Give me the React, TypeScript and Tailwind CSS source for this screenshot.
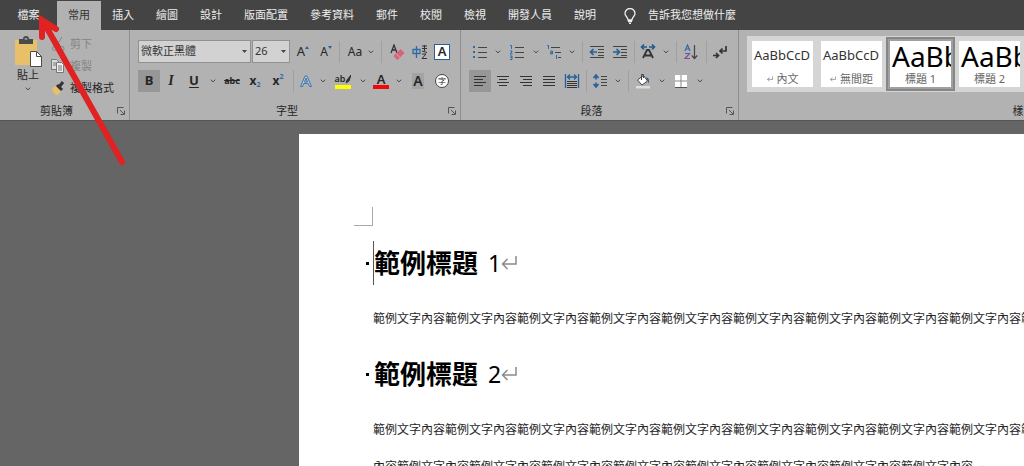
import type { ReactNode } from "react";

const SAMPLE = "範例文字內容";

const tabs = ["常用", "插入", "繪圖", "設計", "版面配置", "參考資料", "郵件", "校閱", "檢視", "開發人員", "說明"];

const styles = [
  { name: "內文", mark: true, big: false },
  { name: "無間距", mark: true, big: false },
  { name: "標題 1", mark: false, big: true },
  { name: "標題 2", mark: false, big: true },
];

interface ToolProps {
  label: string;
  className?: string;
  active?: boolean;
  children: ReactNode;
}

function Tool({ label, className = "w-[22px]", active, children }: ToolProps) {
  return (
    <button
      type="button"
      aria-label={label}
      aria-pressed={active}
      className={`flex h-[22px] shrink-0 items-center justify-center ${active ? "bg-[#979797]" : ""} ${className}`}
    >
      {children}
    </button>
  );
}

function Chevron() {
  return (
    <svg width="6" height="4" viewBox="0 0 6 4" fill="none" stroke="#444" aria-hidden="true">
      <path d="M.8.7 3 2.9 5.2.7" />
    </svg>
  );
}

function More({ label }: { label: string }) {
  return (
    <Tool label={label} className="w-3.5">
      <Chevron />
    </Tool>
  );
}

function Divider() {
  return (
    <div className="flex w-1.5 shrink-0 justify-center">
      <div className="h-[22px] w-px bg-[#a0a0a0]" />
    </div>
  );
}

// width/height 16 box shared by most ribbon icons
function Icon({ children }: { children: ReactNode }) {
  return (
    <svg width="16" height="16" viewBox="0 0 16 16" fill="none" aria-hidden="true">
      {children}
    </svg>
  );
}

function Group({ title, className, children }: { title: string; className: string; children: ReactNode }) {
  return (
    <section
      aria-label={title}
      className={`flex shrink-0 flex-col justify-between border-r border-[#8e8e8e] ${className}`}
    >
      {children}
      <div className="flex h-[18px] items-center pr-1">
        <span className="flex-1 pr-1 text-center text-[11px] leading-4">{title}</span>
        <button type="button" aria-label={`${title}設定`}>
          <svg width="8" height="8" viewBox="0 0 8 8" fill="none" stroke="#555">
            <path d="M.5 6.500v-6h6M3 3l4 4M7.500 3.500v4h-4" />
          </svg>
        </button>
      </div>
    </section>
  );
}

function Combo({ label, value, className }: { label: string; value: string; className: string }) {
  return (
    <div className={`relative h-[23px] shrink-0 ${className}`}>
      <select
        aria-label={label}
        defaultValue={value}
        className="block h-full w-full appearance-none border border-[#919191] bg-[#d2d2d2] pl-0.5 text-[11px] text-[#333]"
      >
        <option>{value}</option>
      </select>
      <svg width="5" height="3" viewBox="0 0 5 3" className="pointer-events-none absolute top-2.5 right-1" aria-hidden="true">
        <path d="M0 0h5L2.500 3z" fill="#444" />
      </svg>
    </div>
  );
}

function ClipboardGroup() {
  return (
    <Group title="剪貼簿" className="w-[130px]">
      <div className="flex pt-[3px] pl-3">
        <button type="button" className="flex w-8 flex-col items-center pt-[3px] text-[11px] leading-4">
          <svg width="28" height="31" viewBox="0 0 28 31" aria-hidden="true">
            <path d="M1 4h22v25H1z" fill="#e8c069" />
            <path d="M5 3h4a3 3 0 0 1 6 0h4v5H5z" fill="#4a4a4a" />
            <path d="M10.500 3.500a1.500 1.500 0 0 1 3 0z" fill="#bbb" />
            <path d="M16.500 15.500h6l5 5v10h-11z" fill="#fff" stroke="#4a4a4a" />
            <path d="M22.500 15.500v5h5" fill="none" stroke="#4a4a4a" />
          </svg>
          <span>貼上</span>
          <span className="flex h-3 items-center">
            <Chevron />
          </span>
        </button>
        <div className="flex flex-col pl-1.5 text-[11px] leading-4 whitespace-nowrap">
          <button type="button" disabled className="flex h-[22px] items-center gap-1 text-[#858585]">
            <Icon>
              <path d="m5 1 6 10M12 1 6 11" stroke="#858585" />
              <circle cx="4.500" cy="12.500" r="2" stroke="#858585" />
              <circle cx="12" cy="12.500" r="2" stroke="#858585" />
            </Icon>
            剪下
          </button>
          <button type="button" disabled className="flex h-[22px] items-center gap-1 text-[#858585]">
            <Icon>
              <path d="M1.500 1.500h5l2 2v8h-7z" fill="#ddd" stroke="#777" />
              <path d="M6.500 4.500h5l2 2v8h-7z" fill="#eee" stroke="#777" />
              <path d="M3 5h3M3 7h3M8 8h4M8 10h4M8 12h4" stroke="#777" />
            </Icon>
            複製
          </button>
          <button type="button" className="flex h-[22px] items-center gap-1">
            <Icon>
              <path d="m2 8 4-2 5 5-3 4c-3 0-5-2-6-7z" fill="#e8c069" />
              <path d="m7 5 5 5M9 7l4-5" stroke="#333" strokeWidth="3" />
            </Icon>
            複製格式
          </button>
        </div>
      </div>
    </Group>
  );
}

function FontGroup() {
  return (
    <Group title="字型" className="w-[331px]">
      <div className="flex flex-col gap-[7px] pt-2.5 pl-2">
        <div className="flex h-[23px] items-center">
          <Combo label="字型名稱" value="微軟正黑體" className="mr-px w-[113px]" />
          <Combo label="字型大小" value="26" className="w-[38px]" />
          <Tool label="放大字型" className="w-[26px]">
            <span className="text-[13px]">A</span>
            <svg width="4" height="12" viewBox="0 0 4 12"><path d="M0 3h4L2 0z" fill="#2b6398" /></svg>
          </Tool>
          <Tool label="縮小字型" className="w-5">
            <span className="text-xs">A</span>
            <svg width="4" height="12" viewBox="0 0 4 12"><path d="M0 0h4L2 3z" fill="#2b6398" /></svg>
          </Tool>
          <Divider />
          <Tool label="大小寫轉換" className="w-[22px] pl-1"><span className="text-xs">Aa</span></Tool>
          <More label="大小寫選項" />
          <Divider />
          <Tool label="清除格式" className="w-[26px]">
            <Icon>
              <path d="m2 9 3-8 3 8M3 6h4" stroke="#333" strokeWidth="1.300" />
              <path d="m4.500 12 7-7 4 4-7 7z" fill="#d9627a" />
              <path d="m7 9.500 4 4" stroke="#e9a3b1" />
            </Icon>
          </Tool>
          <Tool label="注音標示" className="w-5">
            <Icon>
              <path d="M1 5.500h7v4H1zM4.500 2v12" stroke="#2f6ba6" strokeWidth="1.300" />
              <path d="M10 2h5M10 4.500h5M12.500 1v6M10 7l5 1.500M10 10h4l-4 4.500h5" stroke="#333" />
            </Icon>
          </Tool>
          <Tool label="字元框線" className="w-6">
            <span className="flex size-4 items-center justify-center border border-[#2f5d8d] bg-white text-[13px] leading-none font-semibold">A</span>
          </Tool>
        </div>
        <div className="flex items-center">
          <Tool label="粗體" active><b className="text-[13px]">B</b></Tool>
          <Tool label="斜體"><i className="font-['Liberation_Serif',serif] text-sm font-bold">I</i></Tool>
          <Tool label="底線" className="w-6"><b className="text-[13px] underline underline-offset-2">U</b></Tool>
          <More label="底線選項" />
          <Tool label="刪除線" className="w-6"><b className="text-[9px] line-through">abc</b></Tool>
          <Tool label="下標">
            <b className="text-xs">x</b>
            <b className="pt-2 text-[7px] text-[#2f6ba6]">2</b>
          </Tool>
          <Tool label="上標" className="w-6">
            <b className="text-xs">x</b>
            <b className="pb-2 text-[7px] text-[#2f6ba6]">2</b>
          </Tool>
          <Divider />
          <Tool label="文字效果" className="w-5">
            <Icon>
              <path d="M2.500 13.500 7 3h2l4.500 10.500h-2l-1.200-3H5.700l-1.200 3zM6.400 9h3.200L8 5z" fill="#b9cde0" stroke="#3d76ad" />
            </Icon>
          </Tool>
          <More label="文字效果選項" />
          <Tool label="醒目提示" className="w-[26px]">
            <span className="flex w-4 flex-col items-center">
              <span className="flex h-3 items-center text-[9px] font-semibold">
                ab
                <svg width="6" height="10" viewBox="0 0 6 10"><path d="M6 1 2 6 1 9l3-2z" fill="#333" stroke="#333" /></svg>
              </span>
              <span className="h-1 w-4 bg-[#ffff00]" />
            </span>
          </Tool>
          <More label="醒目提示色彩" />
          <Tool label="字型色彩">
            <span className="flex w-4 flex-col items-center">
              <span className="h-3 text-[13px] leading-3 font-semibold">A</span>
              <span className="h-1 w-4 bg-[#ee0808]" />
            </span>
          </Tool>
          <More label="字型色彩選項" />
          <Tool label="字元網底" className="w-6">
            <span className="flex h-4 w-3 items-center justify-center bg-[#a3a3a3] text-sm leading-none font-semibold">A</span>
          </Tool>
          <Tool label="圍繞字元" className="w-6">
            <span className="flex size-3.5 items-center justify-center rounded-full border border-[#444] bg-white text-[8px] leading-none">字</span>
          </Tool>
        </div>
      </div>
    </Group>
  );
}

function ParagraphGroup() {
  return (
    <Group title="段落" className="w-[278px]">
      <div className="flex flex-col gap-[7px] pt-2.5 pl-2">
        <div className="flex h-[23px] items-center">
          <Tool label="項目符號">
            <Icon>
              <path d="M1 3h2M1 8h2M1 13h2" stroke="#2f6ba6" strokeWidth="2" />
              <path d="M6 3.500h9M6 8.500h9M6 13.500h9" stroke="#444" />
            </Icon>
          </Tool>
          <More label="項目符號庫" />
          <Tool label="編號" className="w-6">
            <Icon>
              <path d="M1 1.500h1.500V5M1 7h2v1L1 10h2.500M1 12h2v3.500H1M1.500 13.500H3" stroke="#2f6ba6" />
              <path d="M6 3.500h9M6 8.500h9M6 13.500h9" stroke="#444" />
            </Icon>
          </Tool>
          <More label="編號庫" />
          <Tool label="多層次清單">
            <Icon>
              <path d="M1 1.500h1.500V5M4 7h2.500v3H4.500V8.500h2M10.500 11v4" stroke="#2f6ba6" />
              <path d="M5 3.500h9M9 8.500h6M12 13.500h3" stroke="#444" />
            </Icon>
          </Tool>
          <More label="清單庫" />
          <Divider />
          <Tool label="減少縮排" className="w-6">
            <Icon>
              <path d="M1 2.500h14M9 5.500h6M9 8.500h6M9 11.500h6M1 13.500h14" stroke="#444" />
              <path d="M8 8H2M4.500 5 1.500 8l3 3" stroke="#24609c" strokeWidth="1.700" />
            </Icon>
          </Tool>
          <Tool label="增加縮排">
            <Icon>
              <path d="M1 2.500h14M9 5.500h6M9 8.500h6M9 11.500h6M1 13.500h14" stroke="#444" />
              <path d="M1 8h6M4.500 5l3 3-3 3" stroke="#24609c" strokeWidth="1.700" />
            </Icon>
          </Tool>
          <Divider />
          <Tool label="亞洲方式配置">
            <Icon>
              <path d="M7 3H2M4 .5 1.500 3 4 5.500M9 3h5M12 .5 14.500 3 12 5.500" stroke="#245a90" strokeWidth="1.600" />
              <path d="m3 14 4-8h2l4 8M5 11.500h6" stroke="#333" strokeWidth="1.800" />
            </Icon>
          </Tool>
          <More label="亞洲方式選項" />
          <Divider />
          <Tool label="排序" className="w-6">
            <Icon>
              <path d="m2 7 2.500-6L7 7M3 5h3" stroke="#2f6ba6" strokeWidth="1.200" />
              <path d="M2 9.500h4.500L2 14.500h5" stroke="#7b4fa0" strokeWidth="1.200" />
              <path d="M11.500 1v13M8.800 11.500l2.700 3 2.700-3" stroke="#444" strokeWidth="1.200" />
            </Icon>
          </Tool>
          <Divider />
          <Tool label="顯示編輯標記">
            <Icon>
              <path d="M14 2v5H8M10.500 4.500 8 7l2.500 2.500M1 11.500h5M4 9l2.500 2.500L4 14" stroke="#333" strokeWidth="1.700" />
            </Icon>
          </Tool>
        </div>
        <div className="flex items-center">
          <Tool label="靠左對齊" active>
            <Icon><path d="M2 3.500h12M2 6.500h9M2 9.500h12M2 12.500h9" stroke="#333" /></Icon>
          </Tool>
          <Tool label="置中" className="w-6">
            <Icon><path d="M2 3.500h12M4 6.500h8M2 9.500h12M4 12.500h8" stroke="#333" /></Icon>
          </Tool>
          <Tool label="靠右對齊">
            <Icon><path d="M2 3.500h12M5 6.500h9M2 9.500h12M5 12.500h9" stroke="#333" /></Icon>
          </Tool>
          <Tool label="左右對齊" className="w-6">
            <Icon><path d="M2 3.500h12M2 6.500h12M2 9.500h12M2 12.500h12" stroke="#333" /></Icon>
          </Tool>
          <Tool label="分散對齊">
            <Icon>
              <path d="M1.500 1v14M14.500 1v14M3 4h10M6 1.500 3.500 4 6 6.500M10 1.500 12.500 4 10 6.500" stroke="#24609c" strokeWidth="1.300" />
              <path d="M3 8.500h10M3 10.500h10M3 12.500h10M3 14.500h10" stroke="#333" />
            </Icon>
          </Tool>
          <Divider />
          <Tool label="行距">
            <Icon>
              <path d="M4 2v4.500M4 9.500V14M1.500 5 4 2l2.500 3M1.500 11 4 14l2.500-3" stroke="#24609c" strokeWidth="1.600" />
              <path d="M9 3.500h6M9 6.500h6M9 9.500h6M9 12.500h6" stroke="#444" />
            </Icon>
          </Tool>
          <More label="行距選項" />
          <Divider />
          <Tool label="網底" className="w-6">
            <Icon>
              <path d="m2.500 7 6-4.500 4 5.500L7 12z" fill="#fff" stroke="#444" />
              <path d="M6.500 7V1.500h2V5" stroke="#444" />
              <path d="M11 4.500c3 0 3 2 3 6-1-1-1-2-1.500-3z" fill="#2f5d8d" />
              <path d="M1 13h14v2.500H1z" fill="#ddd" />
            </Icon>
          </Tool>
          <More label="網底色彩" />
          <Tool label="框線" className="w-6">
            <Icon>
              <path d="M2 2h12v12H2z" fill="#fff" />
              <path d="M8 2v12M2 8h12" stroke="#888" />
              <path d="M2 14.500h12" stroke="#555" />
            </Icon>
          </Tool>
          <More label="框線選項" />
        </div>
      </div>
    </Group>
  );
}

function StylesGroup() {
  return (
    <Group title="樣式" className="w-[586px]">
      <div className="mt-1.5 ml-2 flex h-14 items-center bg-[#d5d5d5] pl-px">
        {styles.map((s, i) => (
          <button
            type="button"
            key={s.name}
            className={`flex h-[54px] w-[69px] shrink-0 border-2 p-0.5 ${i === 2 ? "border-[#868686] bg-[#a0a0a0]" : "border-transparent"}`}
          >
            <span className="flex h-full w-full flex-col items-center justify-between overflow-hidden bg-white">
              <span
                className={`flex h-[30px] w-full items-center overflow-hidden pl-0.5 font-['Noto_Sans',sans-serif] whitespace-nowrap ${s.big ? "text-[28px] leading-6 text-black" : "text-[13px] text-[#333]"}`}
              >
                {s.big ? "AaBb" : "AaBbCcD"}
              </span>
              <span className="flex items-center gap-1 text-[11px] leading-4 text-[#666]">
                {s.mark && <ReturnMark className="size-1.5 stroke-[#555]" />}
                {s.name}
              </span>
            </span>
          </button>
        ))}
      </div>
    </Group>
  );
}

function ReturnMark({ className }: { className: string }) {
  return (
    <svg viewBox="0 0 16 16" fill="none" strokeWidth="1.500" className={className} aria-hidden="true">
      <path d="M15 1v8H1.500M6.500 4l-5 5 5 5" />
    </svg>
  );
}

function Heading({ no, caret }: { no: number; caret?: boolean }) {
  return (
    <h1 className="flex h-[74px] items-center pl-[67px] text-black">
      <span className="mr-1 size-[3px] bg-black" />
      <span className={`h-11 w-px ${caret ? "bg-[#555]" : ""}`} />
      <span className="text-[26px] leading-10 font-bold">範例標題</span>
      <span className="pl-2.5 font-['Noto_Sans',sans-serif] text-[23px]">{no}</span>
      <ReturnMark className="size-4 stroke-[#8a8a8a]" />
    </h1>
  );
}

export default function App() {
  return (
    <div className="relative flex h-screen flex-col overflow-hidden bg-[#656565] font-['Noto_Sans','Noto_Sans_CJK_TC',sans-serif] text-[#262626]">
      <nav className="flex h-[30px] shrink-0 items-stretch bg-[#444] pt-px text-[11px] whitespace-nowrap text-[#eee]">
        <button type="button" className="w-[57px]">檔案</button>
        {tabs.map((tab, i) => (
          <button
            type="button"
            key={tab}
            className={`px-[11px] ${i === 0 ? "bg-[#b2b2b2] text-[#333]" : ""}`}
          >
            {tab}
          </button>
        ))}
        <button type="button" className="flex items-center gap-3 pl-[17px]">
          <svg width="12" height="16" viewBox="0 0 12 16" fill="none" stroke="#eee" strokeWidth="1.300" aria-hidden="true">
            <path d="M4 12c0-3-3-3.500-3-6.500a5 5 0 0 1 10 0C11 8.500 8 9 8 12zM4 13.500h4M5 15.300h2" />
          </svg>
          告訴我您想做什麼
        </button>
      </nav>

      <div className="flex h-[91px] shrink-0 border-b border-[#555] bg-[#b2b2b2]">
        <ClipboardGroup />
        <FontGroup />
        <ParagraphGroup />
        <StylesGroup />
      </div>

      <main className="flex min-h-0 flex-1 pt-[13px] pl-[299px]">
        <article className="min-w-[860px] flex-1 bg-white pt-[73px]">
          <div className="ml-[55px] h-[19px] w-[19px] border-r border-b border-[#aaa]" />
          <Heading no={1} caret />
          <p className="pr-[86px] pl-[74px] text-xs leading-[37px]">{SAMPLE.repeat(9)}範例文字</p>
          <Heading no={2} />
          <p className="pr-[86px] pl-[74px] text-xs leading-[37px]">
            {SAMPLE.repeat(18)}
            <ReturnMark className="ml-1 inline size-1.5 stroke-[#8a8a8a]" />
          </p>
        </article>
      </main>

      <svg
        width="130"
        height="170"
        viewBox="0 0 130 170"
        fill="none"
        stroke="#e02222"
        strokeWidth="6"
        strokeLinecap="round"
        className="pointer-events-none absolute top-0 left-0"
        aria-hidden="true"
      >
        <path d="M122 162 43 21M42 37V20l14 9" />
      </svg>
    </div>
  );
}
